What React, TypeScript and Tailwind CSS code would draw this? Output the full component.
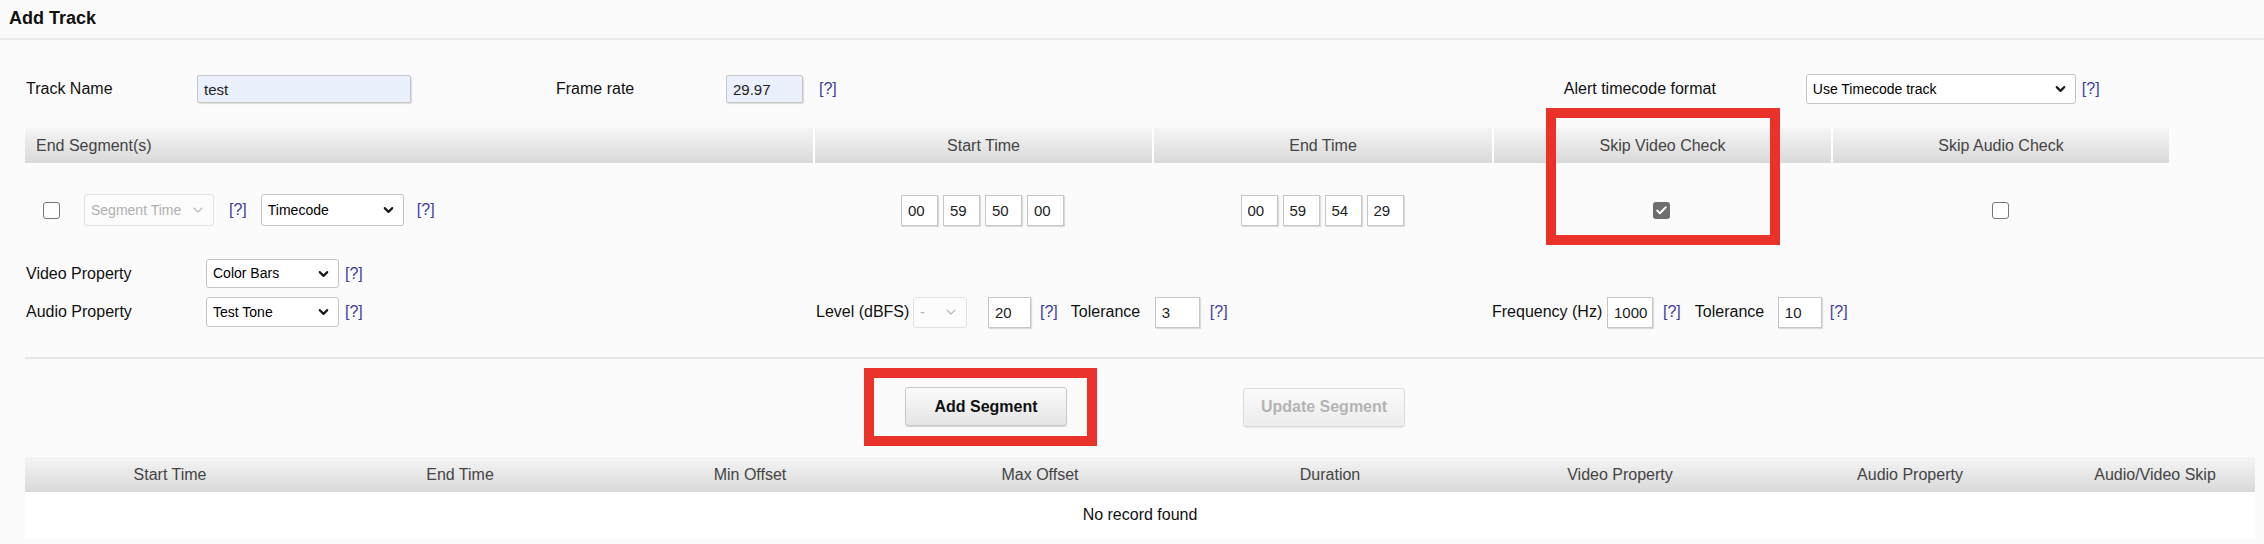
import { ChevronDown, Check } from "lucide-react";

const hdr = "bg-linear-to-b from-[#f5f5f5] to-[#d9d9d9] text-[#444]";

function Help({ className = "" }: { className?: string }) {
  return <span className={`text-[#3d3d9e] ${className}`}>[?]</span>;
}

function Select({
  value,
  w,
  h = "h-[30px]",
  disabled = false,
  className = "",
}: {
  value: string;
  w: string;
  h?: string;
  disabled?: boolean;
  className?: string;
}) {
  return (
    <div className={`relative ${w} ${h} ${className}`}>
      <select
        disabled={disabled}
        defaultValue={value}
        className={`w-full h-full appearance-none rounded-[3px] border pl-[6px] text-[14px] ${
          disabled ? "border-[#e2e2e2] bg-[#fcfcfc] text-[#b0b0b0]" : "border-[#c4c4c4] bg-white text-black"
        }`}
      >
        <option>{value}</option>
      </select>
      <ChevronDown
        size={disabled ? 16 : 15}
        strokeWidth={disabled ? 1.6 : 3.4}
        className={`pointer-events-none absolute right-[8px] top-1/2 -translate-y-1/2 ${
          disabled ? "text-[#b8b8b8]" : "text-[#1a1a1a]"
        }`}
      />
    </div>
  );
}

function TextBox({ value, w, h = "h-[31px]", blue = false }: { value: string; w: string; h?: string; blue?: boolean }) {
  return (
    <input
      readOnly
      value={value}
      className={`${w} ${h} border border-[#c6c6c6] pl-[6px] text-[15px] text-[#222] shadow-[1px_1px_1px_rgba(0,0,0,0.12)] outline-none ${
        blue ? "bg-[#ebf0fd] rounded-[2px]" : "bg-white"
      }`}
    />
  );
}

function Box({ checked = false }: { checked?: boolean }) {
  return checked ? (
    <span className="flex h-[17px] w-[17px] items-center justify-center rounded-[3px] bg-[#6e6e6e]">
      <Check size={13} strokeWidth={3.5} className="text-white" />
    </span>
  ) : (
    <span className="h-[17px] w-[17px] rounded-[3px] border-[1.5px] border-[#777] bg-white" />
  );
}

function TimeGroup({ parts }: { parts: string[] }) {
  return (
    <div className="flex justify-center gap-[5px]">
      {parts.map((p, i) => (
        <TextBox key={i} value={p} w="w-[37px]" />
      ))}
    </div>
  );
}

const cols = ["Start Time", "End Time", "Min Offset", "Max Offset", "Duration", "Video Property", "Audio Property"];

export default function App() {
  return (
    <div className="relative h-[544px] w-[2264px] overflow-hidden bg-[#fbfbfb] font-['Liberation_Sans',Arial,sans-serif] text-[16px] text-[#111]">
      <div className="flex h-[40px] items-center border-b-2 border-[#ebebeb] pl-[9px] pb-[2px] text-[18px] font-bold">
        Add Track
      </div>

      <div className="pl-[25px]">
        <div className="mt-[35px] flex h-[28px] items-center">
          <span className="w-[172px] pl-[1px]">Track Name</span>
          <TextBox value="test" w="w-[214px]" h="h-[28px]" blue />
          <span className="ml-[145px] w-[170px]">Frame rate</span>
          <TextBox value="29.97" w="w-[77px]" h="h-[28px]" blue />
          <Help className="ml-[16px]" />
          <span className="ml-[727px] w-[242px]">Alert timecode format</span>
          <Select value="Use Timecode track" w="w-[270px]" />
          <Help className="ml-[6px]" />
        </div>

        <div className={`mt-[25px] flex h-[35px] w-[2144px] items-center ${hdr}`}>
          <div className="flex h-full w-[788px] items-center pl-[11px]">End Segment(s)</div>
          <div className="flex h-full w-[339px] items-center justify-center border-l-2 border-white">Start Time</div>
          <div className="flex h-full w-[340px] items-center justify-center border-l-2 border-white">End Time</div>
          <div className="flex h-full w-[339px] items-center justify-center border-l-2 border-white">Skip Video Check</div>
          <div className="flex h-full w-[338px] items-center justify-center border-l-2 border-white">Skip Audio Check</div>
        </div>

        <div className="mt-[31px] flex h-[32px] items-center">
          <div className="flex w-[788px] items-center pl-[18px]">
            <Box />
            <Select value="Segment Time" w="w-[130px]" h="h-[32px]" disabled className="ml-[24px]" />
            <Help className="ml-[15px]" />
            <Select value="Timecode" w="w-[143px]" h="h-[32px]" className="ml-[14px]" />
            <Help className="ml-[13px]" />
          </div>
          <div className="w-[339px]">
            <TimeGroup parts={["00", "59", "50", "00"]} />
          </div>
          <div className="w-[340px]">
            <TimeGroup parts={["00", "59", "54", "29"]} />
          </div>
          <div className="flex w-[339px] justify-center">
            <Box checked />
          </div>
          <div className="flex w-[338px] justify-center">
            <Box />
          </div>
        </div>

        <div className="mt-[33px] flex h-[29px] items-center">
          <span className="w-[181px] pl-[1px]">Video Property</span>
          <Select value="Color Bars" w="w-[133px]" h="h-[29px]" />
          <Help className="ml-[6px]" />
        </div>

        <div className="mt-[9px] flex h-[30px] items-center">
          <div className="flex w-[788px] items-center">
            <span className="w-[181px] pl-[1px]">Audio Property</span>
            <Select value="Test Tone" w="w-[133px]" />
            <Help className="ml-[6px]" />
          </div>
          <div className="flex w-[679px] items-center pl-[3px]">
            <span className="w-[97px]">Level (dBFS)</span>
            <Select value="-" w="w-[54px]" h="h-[31px]" disabled />
            <TextBox value="20" w="w-[43px] ml-[21px]" />
            <Help className="ml-[9px]" />
            <span className="ml-[13px] w-[84px]">Tolerance</span>
            <TextBox value="3" w="w-[45px]" />
            <Help className="ml-[10px]" />
          </div>
          <div className="flex items-center">
            <span className="w-[115px]">Frequency (Hz)</span>
            <TextBox value="1000" w="w-[46px]" />
            <Help className="ml-[10px]" />
            <span className="ml-[14px] w-[83px]">Tolerance</span>
            <TextBox value="10" w="w-[44px]" />
            <Help className="ml-[8px]" />
          </div>
        </div>

        <div className="mt-[30px] h-[2px] bg-[#e6e6e6]" />

        <div className="mt-[9px] flex items-center">
          <div className="ml-[839px] border-[10px] border-[#e9332a] pt-[9px] pb-[10px] pl-[31px] pr-[20px]">
            <button className="h-[39px] w-[162px] rounded-[3px] border border-[#c9c9c9] bg-linear-to-b from-[#fbfbfb] to-[#e4e4e4] text-[16px] font-bold text-[#111] shadow-[0_1px_1px_rgba(0,0,0,0.15)]">
              Add Segment
            </button>
          </div>
          <button className="ml-[146px] h-[39px] w-[162px] rounded-[3px] border border-[#dcdcdc] bg-linear-to-b from-[#fbfbfb] to-[#ececec] text-[16px] font-bold text-[#b4b4b4] shadow-[0_1px_1px_rgba(0,0,0,0.08)]">
            Update Segment
          </button>
        </div>

        <div className="mt-[11px] w-[2230px]">
          <div className={`flex h-[35px] items-center ${hdr}`}>
            {cols.map((c) => (
              <div key={c} className="w-[290px] text-center">
                {c}
              </div>
            ))}
            <div className="w-[200px] text-center">Audio/Video Skip</div>
          </div>
          <div className="flex h-[46px] items-center justify-center bg-white">No record found</div>
        </div>
      </div>

      <div className="pointer-events-none absolute left-[1546px] top-[108px] h-[137px] w-[234px] border-[10px] border-[#e9332a]" />
    </div>
  );
}
